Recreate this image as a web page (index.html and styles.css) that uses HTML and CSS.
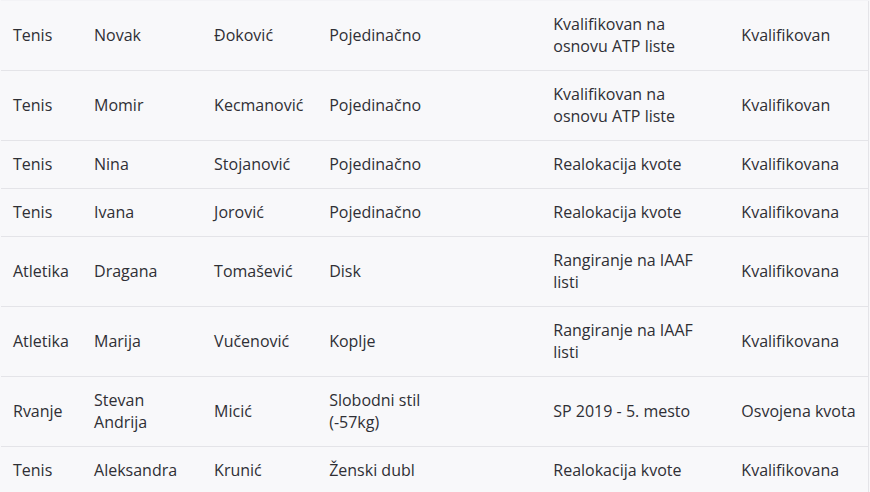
FILE: index.html
```html
<!DOCTYPE html>
<html lang="sr">
<head>
<meta charset="utf-8">
<link rel="stylesheet" href="styles.css">
</head>
<body>
<table class="athletes">
<colgroup>
<col class="c-sport"><col class="c-first"><col class="c-last"><col class="c-event"><col class="c-empty"><col class="c-basis"><col class="c-status">
</colgroup>
<tbody>
<tr><td>Tenis</td><td>Novak</td><td>Đoković</td><td>Pojedinačno</td><td></td><td>Kvalifikovan na osnovu ATP liste</td><td>Kvalifikovan</td></tr>
<tr><td>Tenis</td><td>Momir</td><td>Kecmanović</td><td>Pojedinačno</td><td></td><td>Kvalifikovan na osnovu ATP liste</td><td>Kvalifikovan</td></tr>
<tr><td>Tenis</td><td>Nina</td><td>Stojanović</td><td>Pojedinačno</td><td></td><td>Realokacija kvote</td><td>Kvalifikovana</td></tr>
<tr><td>Tenis</td><td>Ivana</td><td>Jorović</td><td>Pojedinačno</td><td></td><td>Realokacija kvote</td><td>Kvalifikovana</td></tr>
<tr><td>Atletika</td><td>Dragana</td><td>Tomašević</td><td>Disk</td><td></td><td>Rangiranje na IAAF listi</td><td>Kvalifikovana</td></tr>
<tr><td>Atletika</td><td>Marija</td><td>Vučenović</td><td>Koplje</td><td></td><td>Rangiranje na IAAF listi</td><td>Kvalifikovana</td></tr>
<tr><td>Rvanje</td><td>Stevan Andrija</td><td>Micić</td><td>Slobodni stil (-57kg)</td><td></td><td>SP 2019 - 5. mesto</td><td>Osvojena kvota</td></tr>
<tr><td>Tenis</td><td>Aleksandra</td><td>Krunić</td><td>Ženski dubl</td><td></td><td>Realokacija kvote</td><td>Kvalifikovana</td></tr>
</tbody>
</table>
</body>
</html>
```
FILE: styles.css
```css
html, body {
  margin: 0;
  padding: 0;
  background: #f8f8fa;
}
.athletes {
  table-layout: fixed;
  border-collapse: collapse;
  width: 868px;
  margin-left: 1px;
  font-family: "Open Sans", "DejaVu Sans", sans-serif;
  font-size: 16px;
  line-height: 22px;
  color: #2f2f35;
  background: #f8f8fa;
  border-right: 1px solid #e4e4e8;
}
.athletes td {
  padding: 12px 12px 13px 12px;
  border-top: 1px solid #e4e4e8;
  vertical-align: middle;
  text-align: left;
}
.athletes tr:first-child td {
  border-top-color: #f3f3f6;
}
.c-sport { width: 81px; }
.c-first { width: 120px; }
.c-last { width: 115px; }
.c-event { width: 150px; }
.c-empty { width: 74px; }
.c-basis { width: 188px; }
.c-status { width: 139px; }
```
